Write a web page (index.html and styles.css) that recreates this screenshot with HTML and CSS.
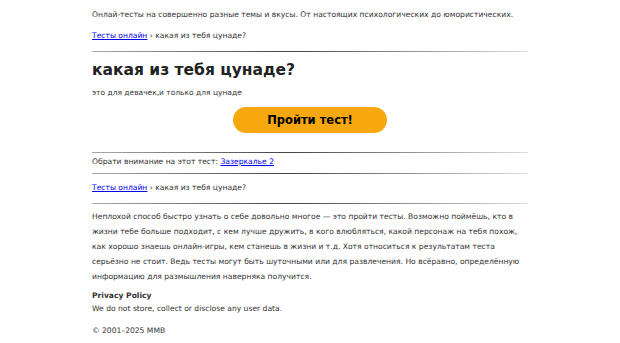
FILE: index.html
```html
<!DOCTYPE html>
<html lang="ru">
<head>
<meta charset="utf-8">
<title>какая из тебя цунаде?</title>
<link rel="stylesheet" href="styles.css">
</head>
<body>
<div class="page">
  <p class="intro">Онлай-тесты на совершенно разные темы и вкусы. От настоящих психологических до юмористических.</p>
  <p class="crumbs crumbs-top"><a href="#">Тесты онлайн</a> › какая из тебя цунаде?</p>
  <hr class="rule">
  <h1 class="title">какая из тебя цунаде?</h1>
  <p class="subtitle">это для девачек,и только для цунаде</p>
  <div class="cta"><a class="btn" href="#">Пройти тест!</a></div>
  <hr class="rule">
  <p class="notice">Обрати внимание на этот тест: <a href="#">Зазеркалье 2</a></p>
  <hr class="rule">
  <p class="crumbs crumbs-bottom"><a href="#">Тесты онлайн</a> › какая из тебя цунаде?</p>
  <hr class="rule">
  <p class="about">Неплохой способ быстро узнать о себе довольно многое — это пройти тесты. Возможно поймёшь, кто в жизни тебе больше подходит, с кем лучше дружить, в кого влюбляться, какой персонаж на тебя похож, как хорошо знаешь онлайн-игры, кем станешь в жизни и т.д. Хотя относиться к результатам теста серьёзно не стоит. Ведь тесты могут быть шуточными или для развлечения. Но всёравно, определённую информацию для размышления наверняка получится.</p>
  <p class="privacy-title">Privacy Policy</p>
  <p class="privacy">We do not store, collect or disclose any user data.</p>
  <p class="copy">© 2001–2025 MMB</p>
</div>
</body>
</html>
```
FILE: styles.css
```css
html, body {
  margin: 0;
  padding: 0;
  background: #fff;
}
body {
  font-family: "DejaVu Sans", Verdana, sans-serif;
  font-size: 7.6px;
  line-height: 12px;
  color: #333;
}
.page {
  width: 436px;
  margin: 0 auto;
  padding-top: 9px;
}
p { margin: 0; }
a { color: #00e; }
.crumbs-top {
  margin-top: 9px;
}
.rule {
  border: 0;
  height: 1px;
  margin: 9px 0 0;
  background: linear-gradient(to right, #aaa, #444 45%, #ddd);
}
.title {
  font-size: 15.5px;
  font-weight: bold;
  color: #222;
  margin: 8px 0 0;
  line-height: 20px;
}
.subtitle {
  font-size: 7.5px;
  margin-top: 7px;
}
.cta {
  display: flex;
  justify-content: center;
  margin-top: 8px;
}
.btn {
  display: flex;
  align-items: center;
  justify-content: center;
  width: 154px;
  height: 26px;
  border-radius: 13px;
  background: #f8a80f;
  color: #000;
  font-weight: bold;
  font-size: 11.5px;
  text-decoration: none;
}
.cta + .rule {
  margin-top: 19px;
}
.notice {
  margin-top: 3px;
}
.notice + .rule {
  margin-top: 5px;
}
.crumbs-bottom {
  margin-top: 8px;
}
.about {
  margin-top: 5px;
  line-height: 15px;
}
.privacy-title {
  font-weight: bold;
  margin-top: 6px;
}
.privacy {
  margin-top: 1px;
}
.copy {
  margin-top: 10px;
}
```
